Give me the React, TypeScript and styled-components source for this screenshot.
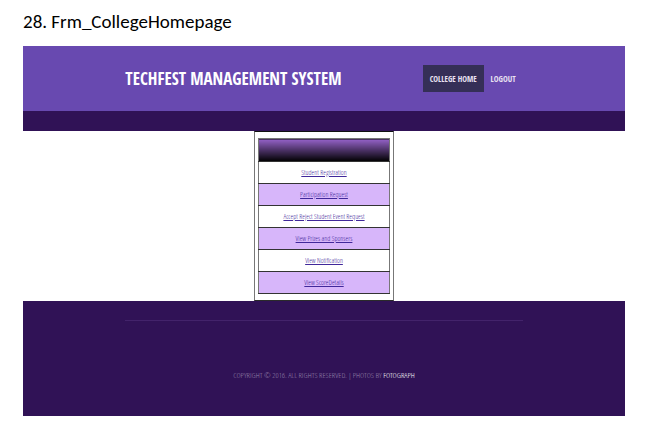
import React from "react";
import styled, { createGlobalStyle } from "styled-components";

const condensed = `"Open Sans Condensed", "Liberation Sans", Arial, sans-serif`;
const condensedLight = `"Open Sans Condensed Light", "Open Sans Condensed", "Liberation Sans", Arial, sans-serif`;

const GlobalStyle = createGlobalStyle`
  *, *::before, *::after { box-sizing: border-box; }
  body { margin: 0; background: #ffffff; font-family: ${condensed}; }
`;

const Document = styled.main`
  padding: 10px 21px 11px 23px;
`;

const Caption = styled.h2`
  margin: 0 0 12px;
  font: 400 19px/24px Carlito, Lato, sans-serif;
  color: #000000;
`;

const Site = styled.div`
  display: flex;
  flex-direction: column;
`;

const Header = styled.header`
  background: #6849b0;
  border-bottom: 20px solid #301256;
`;

const Container = styled.div`
  width: 66%;
  margin: 0 auto;
`;

const HeaderBar = styled(Container)`
  display: flex;
  align-items: center;
  justify-content: space-between;
  min-height: 65px;
`;

const Title = styled.h1`
  margin: 0;
  font-size: 17px;
  line-height: 24px;
  font-weight: 700;
  color: #ffffff;
  white-space: nowrap;
`;

const Nav = styled.nav`
  display: flex;
  align-items: center;
`;

const NavLink = styled.a<{ $active?: boolean }>`
  padding: 0 7px;
  font-size: 8px;
  line-height: 27px;
  font-weight: 700;
  color: #e9e2f2;
  text-decoration: none;
  white-space: nowrap;
  background: ${(p) => (p.$active ? "#352f57" : "transparent")};
`;

const Panel = styled.section`
  width: 140px;
  margin: 0 auto;
  padding: 6px 3px;
  border: 1px solid #777777;
  border-top-color: #111111;
  border-bottom-color: #2b2b2b;
`;

const MenuTable = styled.table`
  width: 100%;
  border-collapse: collapse;
  border: 1px solid #777777;
`;

const MenuHead = styled.th`
  height: 23px;
  padding: 0;
  background: linear-gradient(#9361c6, #000000);
`;

const MenuCell = styled.td<{ $shaded?: boolean }>`
  height: 22px;
  padding: 0;
  border-top: 1px solid #333333;
  border-bottom: 1px solid #333333;
  background: ${(p) => (p.$shaded ? "#d7b6fa" : "#ffffff")};
  text-align: center;
  font-family: ${condensedLight};
  font-weight: 300;
  font-size: 7px;
  line-height: 12px;
`;

const MenuLink = styled.a`
  color: #40289a;
  text-decoration: underline;
`;

const Footer = styled.footer`
  min-height: 115px;
  padding-top: 19px;
  background: #301256;
`;

const FooterInner = styled(Container)`
  padding-top: 48px;
  border-top: 1px solid #43236b;
  text-align: center;
`;

const Copyright = styled.p`
  margin: 0;
  font-family: ${condensedLight};
  font-weight: 300;
  font-size: 8px;
  line-height: 12px;
  color: #9482aa;
  white-space: nowrap;
`;

const CreditLink = styled.a`
  color: #ffffff;
  text-decoration: none;
`;

const menuItems = [
  "Student Registration",
  "Participation Request",
  "Accept Reject Student Event Request",
  "View Prizes and Sponsers",
  "View Notification",
  "View ScoreDetails",
];

export default function App() {
  return (
    <>
      <GlobalStyle />
      <Document>
        <Caption>28. Frm_CollegeHomepage</Caption>
        <Site>
          <Header>
            <HeaderBar>
              <Title>TECHFEST MANAGEMENT SYSTEM</Title>
              <Nav aria-label="Main">
                <NavLink href="#home" $active aria-current="page">COLLEGE HOME</NavLink>
                <NavLink href="#logout">LOGOUT</NavLink>
              </Nav>
            </HeaderBar>
          </Header>
          <Panel>
            <MenuTable>
              <thead>
                <tr>
                  <MenuHead scope="col" aria-label="College menu" />
                </tr>
              </thead>
              <tbody>
                {menuItems.map((item, index) => (
                  <tr key={item}>
                    <MenuCell $shaded={index % 2 === 1}>
                      <MenuLink href="#menu">{item}</MenuLink>
                    </MenuCell>
                  </tr>
                ))}
              </tbody>
            </MenuTable>
          </Panel>
          <Footer>
            <FooterInner>
              <Copyright>
                COPYRIGHT © 2016. ALL RIGHTS RESERVED. | PHOTOS BY{" "}
                <CreditLink href="#fotograph">FOTOGRAPH</CreditLink>
              </Copyright>
            </FooterInner>
          </Footer>
        </Site>
      </Document>
    </>
  );
}
